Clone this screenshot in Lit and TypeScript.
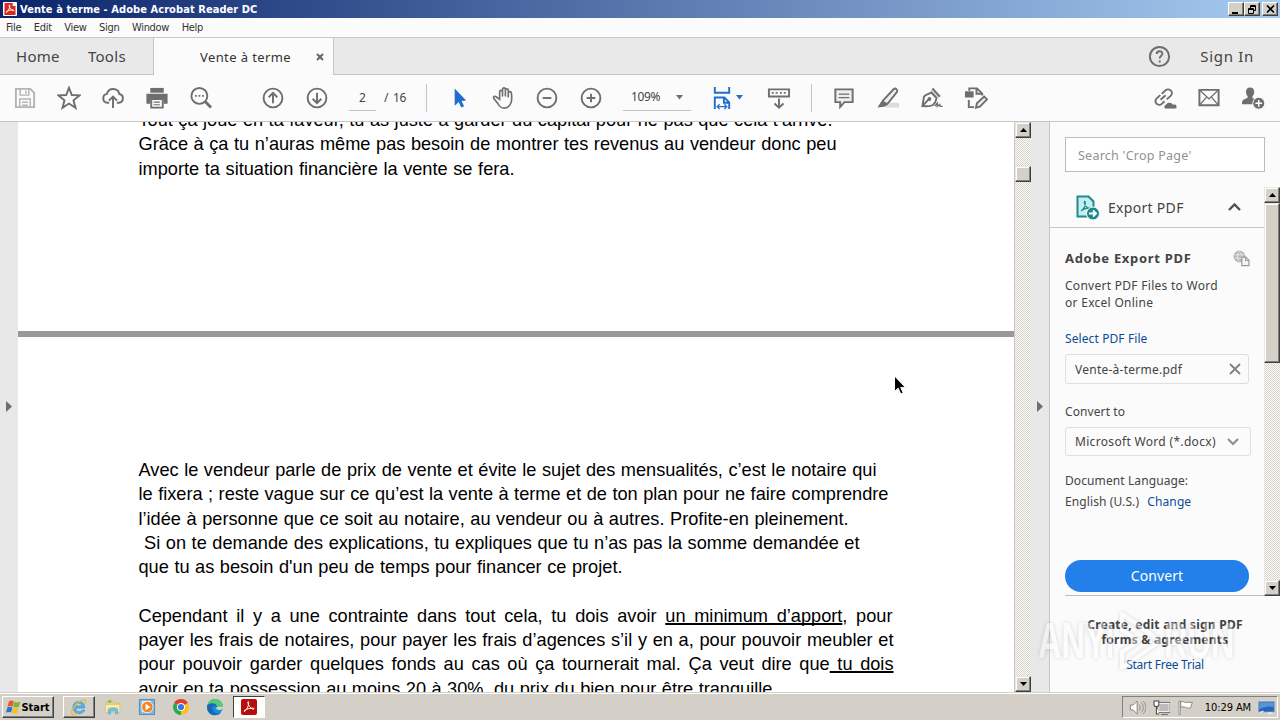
import { LitElement, html, css, svg } from 'lit';
import { customElement, property } from 'lit/decorators.js';
import { classMap } from 'lit/directives/class-map.js';

const icons: Record<string, unknown> = {
  save: svg`<g stroke="#b4b4b4"><path d="M3 3h15l4 4v15H3z"/><path d="M7.500 3v6.500h9V3M7 22v-8.500h11V22M9.500 17h6M9.500 20h6M13.500 5v3" stroke-width="1.500"/></g>`,
  star: svg`<path d="M12.500 1.800l2.900 7.600 8.100.4-6.300 5.100 2.100 7.900-6.800-4.500-6.800 4.500 2.100-7.900L1.500 9.800l8.100-.4z"/>`,
  cloud: svg`<path d="M8.500 17.500H6.600a4.700 4.700 0 0 1-.4-9.300 6.600 6.600 0 0 1 12.900.2 4.600 4.600 0 0 1-.6 9.100h-2"/><path d="M12.500 23V11.500M8.300 15.200l4.200-4.200 4.200 4.200"/>`,
  print: svg`<path d="M5.500 2h14v5h-14z" fill="#6e6e6e" stroke="none"/><path d="M1.500 8h22v10.500h-4v-5h-14v5h-4z" fill="#6e6e6e" stroke="none"/><path d="M6.500 13.500h12v9h-12z" fill="#fbfbfb"/><path d="M9 16.800h6.500M9 19.500h6.500" stroke-width="1.200"/>`,
  find: svg`<circle cx="10.800" cy="10.300" r="8.300"/><path d="M17 16.500l6 6" stroke-width="3"/><path d="M6.300 10.300h1.800M10 10.300h1.800M13.700 10.300h1.800" stroke-width="1.800"/>`,
  up: svg`<circle cx="12.500" cy="12.500" r="9.800"/><path d="M12.500 18V7.500M8 11.700l4.500-4.500 4.500 4.500"/>`,
  down: svg`<circle cx="12.500" cy="12.500" r="9.800"/><path d="M12.500 7v10.500M8 13.300l4.500 4.500 4.500-4.500"/>`,
  select: svg`<path d="M8 2.500v18l4.200-3.800 2.600 5.600 3-1.300-2.600-5.500 4.800-.4z" fill="#1f6fd0" stroke="none"/>`,
  hand: svg`<path d="M9 14V6a1.500 1.500 0 0 1 3 0v5V3.500a1.500 1.500 0 0 1 3 0V11 4.500a1.500 1.500 0 0 1 3 0V12 7.500a1.600 1.600 0 0 1 3.200 0c.5 3 .8 7-.6 10.500-1.200 3-3.200 5-6.800 5-3.500 0-5-1.500-6.500-4.500l-4.500-5.800c-.8-1.600 1.200-2.700 2.500-1.500z" stroke-width="1.700"/>`,
  minus: svg`<circle cx="12.500" cy="12.500" r="9.800"/><path d="M8 12.500h9"/>`,
  plus: svg`<circle cx="12.500" cy="12.500" r="9.800"/><path d="M8 12.500h9M12.500 8v9"/>`,
  fit: svg`<g stroke="#1f6fd0" stroke-width="2"><path d="M5 1v6h15V1M5 24V12h10l5 5v7M14.500 12v5.500H20"/><path d="M8 21.500h9M10 19l-2.500 2.500L10 24M15 19l2.500 2.500L15 24" stroke-width="1.300"/></g>`,
  keys: svg`<path d="M2 3.500h21v7.500H2z"/><path d="M5 7.200h2M9 7.200h2M13.500 7.200h2M17.500 7.200h2"/><path d="M12.500 13v9.500M7.800 18.200l4.700 4.500 4.700-4.500"/>`,
  comment: svg`<path d="M3.500 3.500h18v13.300h-8.500l-4.500 5v-5h-5z" fill="#eee"/><path d="M7 8.500h11M7 12h11" stroke-width="1.300"/>`,
  marker: svg`<path d="M13 17.500h11v5H9z" fill="#dcdcdc" stroke="none"/><path d="M7.500 15L18.500 3.200a2.300 2.300 0 0 1 3.200 3.200L12 18.500l-4.500-.8z" fill="#eee"/><path d="M6.500 14.500l6 5-4 2-7 1z" fill="#6e6e6e" stroke="none"/>`,
  sign: svg`<path d="M12 2.500l10.500 8-4 1.500-7.500-5.800z" fill="#d4d4d4" stroke="none"/><path d="M13 2.500l7.500 8.500M11.800 6.800c-3 1.600-6.200 2-7.600 4.200L2.500 21c3.500.3 8 .4 11-1.200 2-1.700 3-3.500 3.800-7.200zM2.500 21l6.500-7"/><circle cx="9.800" cy="13.500" r="1" fill="#6e6e6e"/><path d="M15.500 21l2.500-3v3.200l2.500-2 .5 2h2.500" stroke-width="1.500"/>`,
  edit: svg`<path d="M1 5.500h9v6.500H1z" fill="#6e6e6e" stroke="none"/><path d="M5.500 5V2.500h8l5.500 5.500V10M13 2.500V8h5.500M5 14.500V22h5.500"/><path d="M12.500 22.500l1-4.500 7.500-7 3 3-7.500 7.500z" fill="#eee"/>`,
  link: svg`<g transform="rotate(-42 10.500 12)"><path d="M10 8.200H5a3.900 3.900 0 0 0 0 7.800h4M7 12h7"/><path d="M12 8.200h5.500a3.900 3.900 0 0 1 0 7.800H12"/></g><path d="M12.500 24a2.500 2.500 0 0 1 .6-4.500 4.200 4.200 0 0 1 7.600-.5A2.500 2.500 0 0 1 23.500 24z" fill="#6e6e6e" stroke="#fbfbfb" stroke-width="1"/>`,
  mail: svg`<path d="M2.500 4h20v16h-20z"/><path d="M3 4.500l9.500 9 9.500-9M3 19.500l7-8M22 19.500l-7-8" stroke-width="1.300"/>`,
  person: svg`<path d="M9.500 1.500c3 0 4.300 2 4.300 4.500 0 2.200-.9 3.600-1.800 4.700v1.800l4 2-3 4.500H1c0-3 .4-4.600 2.500-5.300l3.400-1.400v-1.600C5.900 9.600 5.200 8.200 5.200 6c0-2.500 1.300-4.500 4.300-4.500z" fill="#6e6e6e" stroke="none"/><circle cx="18.500" cy="18" r="6.200" fill="#6e6e6e" stroke="#fbfbfb" stroke-width="1"/><path d="M15 18h7M18.500 14.500v7" stroke="#fff" stroke-width="1.500"/>`,
  help: svg`<circle cx="12.500" cy="12.500" r="9.600"/><path d="M9.700 10c0-3.600 5.700-3.600 5.700-.3 0 2-2.700 2.200-2.700 4.800" stroke-width="1.900"/><path d="M12.700 16.500v2"/>`,
  pdf: svg`<path d="M3 0h19q3 0 3 3v19q0 3-3 3H3q-3 0-3-3V3q0-3 3-3z" fill="#b80d0a" stroke="none"/><path d="M5 19c3-1 7-7 7-13.500 0-2-1.500-2-1.300 0C11.200 10 15 15.500 19.500 16c1.500 0 1.500-1.500-.5-1.700-4.500-.5-9 1.200-13 3.200-1.500 1-1.500 2.500 0 1.500z" stroke="#fff" stroke-width="1.500"/>`,
  file: svg`<path d="M1 0h17l6 6v19H1z" fill="#d8281f" stroke="none"/><path d="M18 0v6h6z" fill="#fff" stroke="none"/><path d="M5 19c3-1 7-7 7-13.500 0-2-1.500-2-1.300 0C11.200 10 15 15.500 19.500 16c1.500 0 1.500-1.500-.5-1.700-4.500-.5-9 1.200-13 3.200-1.500 1-1.500 2.500 0 1.500z" stroke="#fff" stroke-width="2"/>`,
  exportPdf: svg`<path d="M2.500 1.500h11l5 5v15h-16z" fill="#c5eef2" stroke="#1f8a88"/><path d="M6 16c3-2 4.500-5.500 4.300-8.500 0-1.500-1.200-1.300-1 0 .4 3 3 6 6 6.500 1.300 0 1.200-1.200 0-1.200-2.500 0-6 1-8.800 2.400" stroke="#1f8a88" stroke-width="1.200"/><circle cx="18" cy="18.500" r="6.500" fill="#1f8a88" stroke="#fbfbfb" stroke-width="1"/><path d="M14 18.500h6M18 15.500l3 3-3 3" stroke="#fff" stroke-width="1.800"/>`,
  globe: svg`<circle cx="9.500" cy="9.500" r="8" fill="#bbb" stroke="#999" stroke-width="1"/><path d="M2 7h15M2 12h12M9.500 2c-4 4-4 11 0 15M9.500 2c4 3 4 7 3 9" stroke="#f4f4f4" stroke-width="1"/><path d="M13 10.500h6l4.500 4.500v8H13z" fill="#f4f4f4" stroke="#999" stroke-width="1.700"/><path d="M18.500 10.500v5h5" stroke="#999" stroke-width="1.500"/>`,
  windows: svg`<g stroke="none"><path d="M5 2c3-2 6-1 8 .3L11 11C9 9.500 6 9.500 2.500 11z" fill="#ea5a24"/><path d="M14 3c3 1.500 6 1.500 10-.3L21.500 11c-3 2-6 1.500-9.500.3z" fill="#7cb62f"/><path d="M2.200 12.500c3-1.700 6-1.500 8.500 0L8.500 21c-2-1.500-5-1.500-8.500 0z" fill="#2c75c9"/><path d="M11.700 13c3 1.500 6 1.500 9.500 0l-2.500 8.500c-3 2-6 1.500-9 .3z" fill="#f9c01f"/></g>`,
  ie: svg`<path d="M20 14H8c0 5.500 6.500 6.800 9 2.800h3.500c-3.500 8-16.500 6.200-16.500-4C4 2.500 21 1.500 20.500 14M8 11h8.500c-.5-5-8-5-8.500 0z" fill="#4fb9ef" stroke="#2587cd" stroke-width=".8"/><path d="M21 8c3-8-5-6-11-.5S-1 22 4 23c2.500.5 5-1 7-2.500" stroke="#f1b73a" stroke-width="1.800"/>`,
  folder: svg`<g stroke-width="1"><path d="M3 5h8l2 2h8v9H3z" fill="#f1d782" stroke="#d6b356"/><path d="M6 3h4v4H6z" fill="#7dbb5f" stroke="none"/><path d="M2 9h20v11H2z" fill="#faeba7" stroke="#dcc06d"/><path d="M6 22v-6c0-3 13-3 13 0v6h-3v-4H9v4z" fill="#75c6e8" stroke="#4aa4cd"/></g>`,
  media: svg`<path d="M2 2h21v21H2z" fill="#78b5df" stroke="#387ab4" stroke-width="1"/><path d="M5 4h13v16H5z" fill="#d6eaf7" stroke="none"/><circle cx="13" cy="12.500" r="8" fill="#f08622" stroke="#fff" stroke-width="1"/><path d="M10.500 8v9l7-4.500z" fill="#fff" stroke="none"/>`,
  chrome: svg`<g stroke="none"><path d="M12.500 12.500L2.800 7a11.200 11.200 0 0 1 19.400 0z" fill="#e33b2e"/><path d="M12.500 12.500L22.200 7a11.200 11.200 0 0 1-9.700 16.700z" fill="#fbc116"/><path d="M12.500 12.500v11.200A11.200 11.200 0 0 1 2.800 7z" fill="#2da94f"/><circle cx="12.500" cy="12.500" r="5.600" fill="#fff"/><circle cx="12.500" cy="12.500" r="4.300" fill="#3577e5"/></g>`,
  edge: svg`<g stroke="none"><circle cx="12.500" cy="12.500" r="11" fill="#168fd3"/><path d="M1.800 10C4-2 22.500-1 23.500 11.500c0 5-5 6-8 4.500 2.500-4-1-8-5.500-8-4 0-7 1-8.200 2z" fill="#55ca72"/><path d="M1.800 10C5 6 14 6 15 12c-4-3-7 1-5.500 5 1.500 4 7 6.500 12 2.500C16 28-1 24.500 1.800 10z" fill="#1768b8"/><path d="M15.500 16c-2-1-1.500-3 0-4l8.500 0c0 4.500-5 5.500-8.500 4z" fill="#d4d0c8"/></g>`,
  sound: svg`<path d="M2 9h4l6-6v19l-6-6H2z" fill="#fff" stroke="#777" stroke-width="1.300"/><path d="M15 8c2 2 2 7 0 9M18 5c4 4 4 11 0 15M21 3c5 5 5 14 0 19" stroke="#858585" stroke-width="1.200"/>`,
  network: svg`<path d="M8 6h16v13H8z" fill="#bbb" stroke="#fff" stroke-width="2"/><path d="M7 5h18v15H7zM12 23h10" stroke="#555" stroke-width="1.200"/><path d="M1.500 3v5c0 4 7 4 7 0V3zM5 11v11h4" fill="#fff" stroke="#444" stroke-width="1.500"/>`,
  flag: svg`<path d="M3 3h2v20H3z" fill="#fff" stroke="#777" stroke-width="1"/><path d="M5.500 4c4-1.500 6 2 10 1h7l-2.500 8c-4 1.500-6-1-8-1s-4-1-6.500 0z" fill="#fff" stroke="#777" stroke-width="1.200"/>`,
  desktop: svg`<path d="M1 4h23v15H1z" fill="#2864ba" stroke="#8a9db5" stroke-width="1"/><path d="M2 5h21v7c-8-2-14 0-21 3z" fill="#5595dc" stroke="none"/><path d="M3 20l5-2M14 21h7" stroke="#eee" stroke-width="2"/>`,
};

@customElement('ui-icon')
export class UiIcon extends LitElement {
  @property() name = '';
  @property({ type: Number }) size = 25;

  static styles = css`
    :host {
      display: inline-flex;
      flex: none;
    }
    .icon {
      display: block;
      fill: none;
      stroke: #6e6e6e;
      stroke-width: 2;
    }
  `;

  render() {
    return html`<svg class="icon" width=${this.size} height=${this.size} viewBox="0 0 25 25">${icons[this.name]}</svg>`;
  }
}

@customElement('classic-scrollbar')
export class ClassicScrollbar extends LitElement {
  // space between the up button and the thumb, and thumb length
  @property({ type: Number }) offset = 0;
  @property({ type: Number }) thumb = 16;

  static styles = css`
    :host {
      display: flex;
      flex-direction: column;
      box-sizing: border-box;
      width: 16px;
      background: repeating-conic-gradient(#d8d4cb 0 25%, #fbfbf8 0 50%) 0 0 / 2px 2px;
    }
    .box {
      flex: none;
      height: 16px;
      box-sizing: border-box;
      background: #d4d0c8;
      border: 1px solid;
      border-color: #e8e6e0 #404040 #404040 #e8e6e0;
      box-shadow: inset -1px -1px #808080, inset 1px 1px #fff;
      display: flex;
      align-items: center;
      justify-content: center;
    }
    .gap {
      flex: none;
    }
    .rest {
      flex: 1;
    }
  `;

  render() {
    return html`
      <div class="box"><svg width="7" height="4"><path d="M0 4L3.500 0 7 4z" /></svg></div>
      <div class="gap" style="height:${this.offset}px"></div>
      <div class="box" style="height:${this.thumb}px"></div>
      <div class="rest"></div>
      <div class="box"><svg width="7" height="4"><path d="M0 0h7L3.500 4z" /></svg></div>
    `;
  }
}

interface Line {
  text: unknown;
  width: number;
}

const firstPage: Line[] = [
  { text: 'Tout ça joue en ta faveur, tu as juste à garder du capital pour ne pas que cela t’arrive.', width: 694 },
  { text: 'Grâce à ça tu n’auras même pas besoin de montrer tes revenus au vendeur donc peu', width: 698 },
  { text: 'importe ta situation financière la vente se fera.', width: 376 },
];

const secondPage: Line[] = [
  { text: 'Avec le vendeur parle de prix de vente et évite le sujet des mensualités, c’est le notaire qui', width: 738 },
  { text: 'le fixera ; reste vague sur ce qu’est la vente à terme et de ton plan pour ne faire comprendre', width: 750 },
  { text: 'l’idée à personne que ce soit au notaire, au vendeur ou à autres. Profite-en pleinement.', width: 710 },
  { text: html`&nbsp;Si on te demande des explications, tu expliques que tu n’as pas la somme demandée et`, width: 721 },
  { text: 'que tu as besoin d\'un peu de temps pour financer ce projet.', width: 484 },
  { text: '', width: 10 },
  { text: html`Cependant il y a une contrainte dans tout cela, tu dois avoir <u>un minimum d’apport</u>, pour`, width: 754 },
  { text: 'payer les frais de notaires, pour payer les frais d’agences s’il y en a, pour pouvoir meubler et', width: 755 },
  { text: html`pour pouvoir garder quelques fonds au cas où ça tournerait mal. Ça veut dire que<u> tu dois</u>`, width: 755 },
  { text: 'avoir en ta possession au moins 20 à 30%, du prix du bien pour être tranquille.', width: 639 },
];

@customElement('pdf-document')
export class PdfDocument extends LitElement {
  static styles = css`
    :host {
      display: block;
      overflow: hidden;
      background: #fff;
      font: 18.2px "Liberation Sans", Arial, sans-serif;
      color: #000;
    }
    .page {
      display: flow-root;
      box-sizing: border-box;
      padding-left: 120.5px;
    }
    .first {
      height: 209px;
    }
    .first .lines {
      margin-top: -14px;
    }
    .second {
      padding-top: 121px;
      border-top: 6px solid #999;
    }
    .line {
      height: 24.3px;
      line-height: 24.3px;
      white-space: nowrap;
      text-align: justify;
      text-align-last: justify;
    }
    u {
      text-decoration-thickness: 2px;
      text-decoration-skip-ink: none;
      text-underline-offset: 1px;
    }
  `;

  renderLines(lines: Line[]) {
    return html`<div class="lines">
      ${lines.map((l) => html`<div class="line" style="width:${l.width}px">${l.text}</div>`)}
    </div>`;
  }

  render() {
    return html`
      <div class="page first">${this.renderLines(firstPage)}</div>
      <div class="page second">${this.renderLines(secondPage)}</div>
    `;
  }
}

@customElement('tools-panel')
export class ToolsPanel extends LitElement {
  static styles = css`
    :host {
      display: flex;
      flex-direction: column;
      box-sizing: border-box;
      background: #fbfbfb;
      border-left: 1px solid #c6c6c6;
      font: 12px/17px "Noto Sans", sans-serif;
      letter-spacing: 0.1px;
      color: #444;
    }
    .search {
      box-sizing: border-box;
      width: 200px;
      height: 35px;
      margin: 15px 0 15px 15px;
      padding: 9px 12px;
      border: 1px solid #bcbcbc;
      background: #fff;
      font-size: 12.5px;
      letter-spacing: 0.25px;
      color: #929292;
    }
    .scroller {
      display: flex;
      height: 409px;
    }
    .content {
      flex: 1;
      display: flex;
      flex-direction: column;
    }
    .head {
      display: flex;
      align-items: center;
      box-sizing: border-box;
      height: 41px;
      padding: 0 23px 0 25px;
      border-bottom: 1px solid #c8c8c8;
      font-size: 14px;
      letter-spacing: 0.3px;
    }
    .head span {
      flex: 1;
      margin-left: 8px;
    }
    .body {
      flex: 1;
      margin-left: 15px;
      border-bottom: 1px solid #bbb;
    }
    .title {
      display: flex;
      justify-content: space-between;
      align-items: center;
      width: 185px;
      margin-top: 21px;
      height: 18px;
      font-size: 13px;
      font-weight: bold;
      letter-spacing: 0.7px;
    }
    .desc {
      margin-top: 10px;
      letter-spacing: 0.28px;
    }
    .link {
      color: #0b4c94;
    }
    .select {
      margin-top: 19px;
    }
    .field {
      display: flex;
      align-items: center;
      justify-content: space-between;
      box-sizing: border-box;
      width: 184px;
      height: 30px;
      margin-top: 7px;
      padding: 0 7px 0 9px;
      border: 1px solid #dedede;
      border-radius: 3px;
      letter-spacing: 0.25px;
    }
    .format {
      width: 186px;
      height: 29px;
      padding-right: 11px;
      letter-spacing: 0.32px;
    }
    .label {
      margin-top: 19px;
    }
    .language {
      margin-top: 14px;
      line-height: 21px;
    }
    .language .link {
      margin-left: 5px;
    }
    .convert {
      width: 184px;
      height: 32px;
      margin-top: 48px;
      border-radius: 16px;
      background: #237fea;
      color: #fff;
      font-size: 14px;
      line-height: 31px;
      text-align: center;
    }
    .promo {
      margin-top: 21px;
      text-align: center;
      line-height: 15px;
    }
    .promo b {
      display: block;
      letter-spacing: 0.25px;
    }
    .promo .link {
      display: block;
      margin-top: 10px;
      letter-spacing: -0.25px;
    }
  `;

  render() {
    return html`
      <div class="search">Search 'Crop Page'</div>
      <div class="scroller">
        <div class="content">
          <div class="head">
            <ui-icon name="exportPdf"></ui-icon>
            <span>Export PDF</span>
            <svg width="13" height="8" fill="none" stroke="#505050" stroke-width="2.400"><path d="M1 7l5.500-5.500L12 7" /></svg>
          </div>
          <div class="body">
            <div class="title">Adobe Export PDF <ui-icon name="globe" size="17"></ui-icon></div>
            <div class="desc">Convert PDF Files to Word<br />or Excel Online</div>
            <div class="select link">Select PDF File</div>
            <div class="field">
              Vente-à-terme.pdf
              <svg width="12" height="12" stroke="#808080" stroke-width="1.800"><path d="M1 1l10 10M11 1L1 11" /></svg>
            </div>
            <div class="label">Convert to</div>
            <div class="field format">
              Microsoft Word (*.docx)
              <svg width="12" height="8" fill="none" stroke="#8c8c8c" stroke-width="2"><path d="M1 1l5 5 5-5" /></svg>
            </div>
            <div class="language">Document Language:<br />English (U.S.) <span class="link">Change</span></div>
            <div class="convert">Convert</div>
          </div>
        </div>
        <classic-scrollbar .offset=${0} .thumb=${160}></classic-scrollbar>
      </div>
      <div class="promo">
        <b>Create, edit and sign PDF</b>
        <b>forms &amp; agreements</b>
        <span class="link">Start Free Trial</span>
      </div>
    `;
  }
}

@customElement('app-root')
export class AppRoot extends LitElement {
  static styles = css`
    :host {
      display: flex;
      flex-direction: column;
      position: relative;
      width: 1280px;
      height: 720px;
      overflow: hidden;
      background: #fbfbfb;
      font-family: "Noto Sans", sans-serif;
      color: #444;
    }
    .titlebar {
      display: flex;
      align-items: center;
      height: 18px;
      padding: 0 2px 0 4px;
      background: linear-gradient(90deg, #0a246a, #a6caf0);
      color: #fff;
      font: bold 11px "DejaVu Sans Condensed", "DejaVu Sans", sans-serif;
      letter-spacing: 0.07px;
    }
    .appicon {
      display: flex;
      padding: 1px;
      margin-left: -1px;
      background: #fff;
      border-radius: 1px;
    }
    .caption {
      flex: 1;
      margin-left: 3px;
    }
    .winbtn {
      display: flex;
      align-items: center;
      justify-content: center;
      box-sizing: border-box;
      width: 16px;
      height: 14px;
      background: #d4d0c8;
      border: 1px solid;
      border-color: #fff #404040 #404040 #fff;
      box-shadow: inset -1px -1px #808080;
    }
    .close {
      margin-left: 2px;
    }
    .menu {
      display: flex;
      gap: 12.5px;
      box-sizing: border-box;
      height: 20px;
      padding-left: 6px;
      border-bottom: 1px solid #c8c8c8;
      font: 11px/20px "DejaVu Sans Condensed", "DejaVu Sans", sans-serif;
      letter-spacing: -0.3px;
      color: #333;
    }
    .tabs {
      display: flex;
      height: 37px;
      background: #e9e9e9;
      font-size: 15px;
      line-height: 36px;
      letter-spacing: 0.3px;
    }
    .nav {
      display: flex;
      box-sizing: border-box;
      width: 154px;
      padding-left: 16px;
      gap: 28px;
      border-right: 1px solid #c6c6c6;
      border-bottom: 1px solid #c6c6c6;
    }
    .tab {
      display: flex;
      align-items: center;
      box-sizing: border-box;
      width: 180px;
      padding: 0 9px 0 46px;
      justify-content: space-between;
      background: #fbfbfb;
      border-right: 1px solid #c6c6c6;
      font-size: 13px;
      letter-spacing: 0.4px;
      color: #333;
    }
    .account {
      flex: 1;
      display: flex;
      justify-content: flex-end;
      align-items: center;
      gap: 28px;
      padding-right: 26px;
      border-bottom: 1px solid #c6c6c6;
      letter-spacing: 0.7px;
    }
    .toolbar {
      display: flex;
      align-items: center;
      box-sizing: border-box;
      height: 47px;
      padding: 0 5px 1px 3px;
      border-bottom: 1px solid #c6c6c6;
      font-size: 12px;
    }
    .group {
      display: flex;
    }
    .tool {
      display: flex;
      justify-content: center;
      width: 44px;
    }
    .paging {
      margin-left: 28px;
    }
    .input {
      box-sizing: border-box;
      height: 27px;
      line-height: 28px;
      border-bottom: 1px solid #c3c3c3;
    }
    .pageno {
      width: 27px;
      margin-left: 10px;
      text-align: center;
    }
    .total {
      width: 41px;
      margin-left: 8px;
      word-spacing: 2px;
      letter-spacing: -0.3px;
    }
    .divider {
      width: 1px;
      height: 28px;
      margin: 0 10px 0 1px;
      background: #c3c3c3;
    }
    .zoom {
      display: flex;
      align-items: center;
      justify-content: space-between;
      width: 68px;
      margin-left: 10px;
      padding: 0 8px;
      letter-spacing: -0.4px;
    }
    .fit {
      display: flex;
      align-items: center;
      gap: 2px;
      margin-left: 19px;
      width: 47px;
    }
    .keys {
      margin-right: 9px;
    }
    .share {
      margin-left: auto;
    }
    .main {
      flex: 1;
      display: flex;
      min-height: 0;
    }
    .rail {
      display: flex;
      align-items: center;
      justify-content: center;
      box-sizing: border-box;
      width: 18px;
      padding-bottom: 2px;
      background: #e8e8e8;
    }
    .doc {
      width: 996px;
    }
    .docbar {
      width: 17px;
      border-left: 1px solid #c8c8c8;
    }
    .panel {
      width: 231px;
    }
    .taskbar {
      display: flex;
      align-items: center;
      box-sizing: border-box;
      height: 28px;
      padding: 1px 2px 0;
      background: #d4d0c8;
      border-top: 1px solid #d4d0c8;
      box-shadow: inset 0 1px #fff;
      font: 11px "DejaVu Sans Condensed", "DejaVu Sans", sans-serif;
      color: #000;
    }
    .raised {
      display: flex;
      align-items: center;
      justify-content: center;
      box-sizing: border-box;
      height: 22px;
      border: 1px solid;
      border-color: #fff #404040 #404040 #fff;
      box-shadow: inset -1px -1px #808080;
    }
    .start {
      width: 52px;
      margin-right: 9px;
      font-weight: bold;
    }
    .task {
      display: flex;
      align-items: center;
      justify-content: center;
      box-sizing: border-box;
      width: 32px;
      height: 22px;
      margin-right: 2px;
    }
    .pressed {
      border: 1px solid;
      border-color: #404040 #fff #fff #404040;
      background: #fff;
    }
    .tray {
      display: flex;
      align-items: center;
      box-sizing: border-box;
      width: 156px;
      height: 22px;
      margin-left: auto;
      padding: 0 2px 0 6px;
      gap: 7px;
      border: 1px solid;
      border-color: #808080 #fff #fff #808080;
    }
    .clock {
      flex: 1;
      text-align: right;
      white-space: nowrap;
      letter-spacing: -0.1px;
    }
    .cursor {
      position: absolute;
      left: 893px;
      top: 375px;
    }
    .watermark {
      position: absolute;
      left: 1038px;
      top: 608px;
      display: flex;
      align-items: center;
      width: 196px;
      height: 66px;
      font: bold 50px/66px "Liberation Sans", sans-serif;
      color: #fff;
      opacity: 0.42;
      filter: drop-shadow(0 0 2px rgba(0, 0, 0, 0.35));
    }
    .word {
      width: 68px;
      white-space: nowrap;
      transform: scaleX(0.65);
      transform-origin: 0 50%;
    }
  `;

  tools(names: string[]) {
    return names.map((n) => html`<div class="tool"><ui-icon name=${n} size="24"></ui-icon></div>`);
  }

  caret(color: string) {
    return html`<svg width="7" height="5" fill=${color}><path d="M0 0h7L3.500 4.500z" /></svg>`;
  }

  render() {
    const tasks = ['ie', 'folder', 'media', 'chrome', 'edge', 'pdf'];
    return html`
      <div class="titlebar">
        <div class="appicon"><ui-icon name="file" size="12"></ui-icon></div>
        <div class="caption">Vente à terme - Adobe Acrobat Reader DC</div>
        <div class="winbtn"><svg width="10" height="9"><path d="M1 7h6v2H1z" /></svg></div>
        <div class="winbtn"><svg width="10" height="9" fill="none" stroke="#000"><path d="M3.500 3V.5h5v5H7M3 1.500h6M1.500 3.500h5v5h-5zM1 4.500h6" /></svg></div>
        <div class="winbtn close"><svg width="9" height="8" stroke="#000" stroke-width="1.600"><path d="M1 .5l7 7M8 .5l-7 7" /></svg></div>
      </div>
      <div class="menu">
        ${['File', 'Edit', 'View', 'Sign', 'Window', 'Help'].map((m) => html`<span>${m}</span>`)}
      </div>
      <div class="tabs">
        <div class="nav"><span>Home</span><span>Tools</span></div>
        <div class="tab">
          <span>Vente à terme</span>
          <svg width="8" height="8" stroke="#666" stroke-width="2"><path d="M1 1l6 6M7 1L1 7" /></svg>
        </div>
        <div class="account"><ui-icon name="help"></ui-icon><span>Sign In</span></div>
      </div>
      <div class="toolbar">
        <div class="group">${this.tools(['save', 'star', 'cloud', 'print', 'find'])}</div>
        <div class="group paging">${this.tools(['up', 'down'])}</div>
        <div class="input pageno">2</div>
        <div class="total">/ 16</div>
        <div class="divider"></div>
        <div class="group">${this.tools(['select', 'hand', 'minus', 'plus'])}</div>
        <div class="input zoom">109% ${this.caret('#6e6e6e')}</div>
        <div class="fit"><ui-icon name="fit" size="24"></ui-icon>${this.caret('#1f6fd0')}</div>
        <div class="group keys">${this.tools(['keys'])}</div>
        <div class="divider"></div>
        <div class="group">${this.tools(['comment', 'marker', 'sign', 'edit'])}</div>
        <div class="group share">${this.tools(['link', 'mail', 'person'])}</div>
      </div>
      <div class="main">
        <div class="rail"><svg width="6" height="11" fill="#6e6e6e"><path d="M0 0l6 5.500L0 11z" /></svg></div>
        <pdf-document class="doc"></pdf-document>
        <classic-scrollbar class="docbar" .offset=${28} .thumb=${16}></classic-scrollbar>
        <div class="rail"><svg width="6" height="11" fill="#6e6e6e"><path d="M0 0l6 5.500L0 11z" /></svg></div>
        <tools-panel class="panel"></tools-panel>
      </div>
      <div class="taskbar">
        <div class="raised start"><ui-icon name="windows" size="15"></ui-icon>Start</div>
        ${tasks.map((t) => html`
          <div class=${classMap({ task: true, raised: t === 'ie', pressed: t === 'pdf' })}>
            <ui-icon name=${t} size=${t === 'pdf' ? 16 : 18}></ui-icon>
          </div>`)}
        <div class="tray">
          <ui-icon name="sound" size="17"></ui-icon>
          <ui-icon name="network" size="17"></ui-icon>
          <ui-icon name="flag" size="17"></ui-icon>
          <span class="clock">10:29 AM</span>
          <ui-icon name="desktop" size="17"></ui-icon>
        </div>
      </div>
      <svg class="cursor" width="13" height="20" stroke="#fff" stroke-width="1"><path d="M1.500 1v15.500l3.700-3.300 2.600 5.800 2.400-1.100-2.500-5.500h4.800z" /></svg>
      <div class="watermark">
        <span class="word">ANY</span>
        <svg width="58" height="62" fill="none" stroke="#fff" stroke-width="4" stroke-linejoin="round"><path d="M16 4l38 27-38 27V42l16-11-16-11zM4 14v34" /></svg>
        <span class="word">RUN</span>
      </div>
    `;
  }
}
